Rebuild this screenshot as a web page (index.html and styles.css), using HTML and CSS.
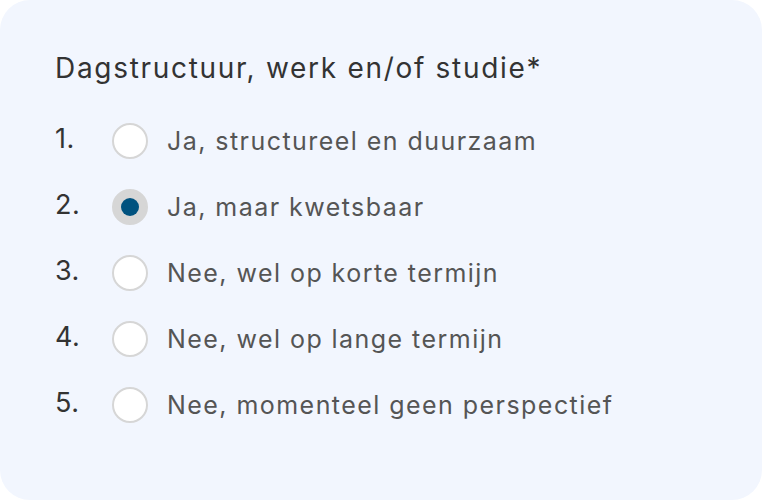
FILE: index.html
```html
<!DOCTYPE html>
<html lang="nl">
<head>
  <meta charset="UTF-8">
  <meta name="viewport" content="width=device-width, initial-scale=1.0">
  <title>Dagstructuur</title>
  <link rel="stylesheet" href="styles.css">
</head>
<body>
  <main class="card">
    <h1 class="question">Dagstructuur, werk en/of studie*</h1>
    <ol class="options">
      <li class="option">
        <span class="num">1.</span>
        <span class="radio"></span>
        <span class="label">Ja, structureel en duurzaam</span>
      </li>
      <li class="option">
        <span class="num">2.</span>
        <span class="radio checked"></span>
        <span class="label">Ja, maar kwetsbaar</span>
      </li>
      <li class="option">
        <span class="num">3.</span>
        <span class="radio"></span>
        <span class="label">Nee, wel op korte termijn</span>
      </li>
      <li class="option">
        <span class="num">4.</span>
        <span class="radio"></span>
        <span class="label">Nee, wel op lange termijn</span>
      </li>
      <li class="option">
        <span class="num">5.</span>
        <span class="radio"></span>
        <span class="label">Nee, momenteel geen perspectief</span>
      </li>
    </ol>
  </main>
</body>
</html>
```

FILE: styles.css
```css
/* Algemeen */
body {
  margin: 0;
  background: #ffffff;
  font-family: 'Inter', 'Noto Sans', sans-serif;
}

.card {
  box-sizing: border-box;
  width: 762px;
  height: 500px;
  background: #f2f6fe;
  border-radius: 30px;
  padding: 48px 55px;
}

.question {
  margin: 0 0 35px;
  font-size: 28px;
  font-weight: 400;
  letter-spacing: 1.7px;
  color: #333333;
  line-height: 40px;
}

.options {
  list-style: none;
  margin: 0;
  padding: 0;
  display: flex;
  flex-direction: column;
  gap: 30px;
}

.option {
  display: flex;
  align-items: center;
  height: 36px;
}

.num {
  width: 57px;
  font-size: 27px;
  letter-spacing: 0.5px;
  color: #333333;
  margin-top: -5px;
}

.radio {
  box-sizing: border-box;
  flex: none;
  width: 36px;
  height: 36px;
  border-radius: 50%;
  border: 2px solid #d6d6d6;
  background: #ffffff;
  margin-right: 19px;
  display: flex;
  align-items: center;
  justify-content: center;
}

.radio.checked {
  background: #d6d6d6;
}

.radio.checked::after {
  content: "";
  width: 18px;
  height: 18px;
  border-radius: 50%;
  background: #00527f;
}

.label {
  font-size: 25px;
  letter-spacing: 1.45px;
  color: #555555;
}
```
